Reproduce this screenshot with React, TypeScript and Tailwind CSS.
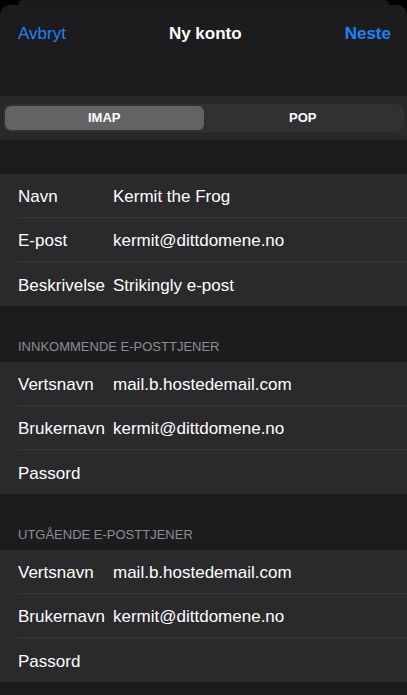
import React from "react";

type Row = { label: string; value: string };

function Group({ rows }: { rows: Row[] }) {
  return (
    <div className="bg-[#2a2a2c]">
      {rows.map((r, i) => (
        <div key={i} className="pl-[18px]">
          <div
            className={
              "flex h-[44px] items-center pt-[3px] " +
              (i < rows.length - 1 ? "border-b border-[#38383a]" : "")
            }
          >
            <span className="w-[95px] shrink-0 text-white">{r.label}</span>
            <span className="text-white">{r.value}</span>
          </div>
        </div>
      ))}
    </div>
  );
}

function SectionHeader({ title }: { title: string }) {
  return (
    <div className="flex h-[56px] items-end pb-[6px] pl-[18px] text-[13px] text-[#8d8d93]">
      {title}
    </div>
  );
}

export default function App() {
  return (
    <div
      className="h-[695px] w-[407px] overflow-hidden bg-black text-[17px]"
      style={{ fontFamily: '"Liberation Sans", Arial, sans-serif' }}
    >
      <div className="mx-[18px] h-[5px] rounded-t-[10px] bg-[#1a1a1c]" />
      <div className="h-[690px] rounded-t-[10px] bg-[#1c1c1e]">
        <div className="flex h-[56px] items-center justify-between pl-[18px] pr-[16px] pt-[1px]">
          <span className="text-[#1a82fb]">Avbryt</span>
          <span className="font-bold text-white">Ny konto</span>
          <span className="font-bold text-[#1a82fb]">Neste</span>
        </div>
        <div className="h-[35px]" />
        <div className="flex h-[44px] items-center bg-[#29292b] px-[3px]">
          <div className="flex h-[28px] w-full rounded-[8px] bg-[#313134] p-[2px]">
            <div className="flex flex-1 items-center justify-center rounded-[6px] bg-[#636366] text-[13px] font-bold text-white">
              IMAP
            </div>
            <div className="flex flex-1 items-center justify-center text-[13px] font-bold text-white">
              POP
            </div>
          </div>
        </div>
        <div className="h-[34px]" />
        <Group
          rows={[
            { label: "Navn", value: "Kermit the Frog" },
            { label: "E-post", value: "kermit@dittdomene.no" },
            { label: "Beskrivelse", value: "Strikingly e-post" },
          ]}
        />
        <SectionHeader title="INNKOMMENDE E-POSTTJENER" />
        <Group
          rows={[
            { label: "Vertsnavn", value: "mail.b.hostedemail.com" },
            { label: "Brukernavn", value: "kermit@dittdomene.no" },
            { label: "Passord", value: "" },
          ]}
        />
        <SectionHeader title="UTGÅENDE E-POSTTJENER" />
        <Group
          rows={[
            { label: "Vertsnavn", value: "mail.b.hostedemail.com" },
            { label: "Brukernavn", value: "kermit@dittdomene.no" },
            { label: "Passord", value: "" },
          ]}
        />
      </div>
    </div>
  );
}
